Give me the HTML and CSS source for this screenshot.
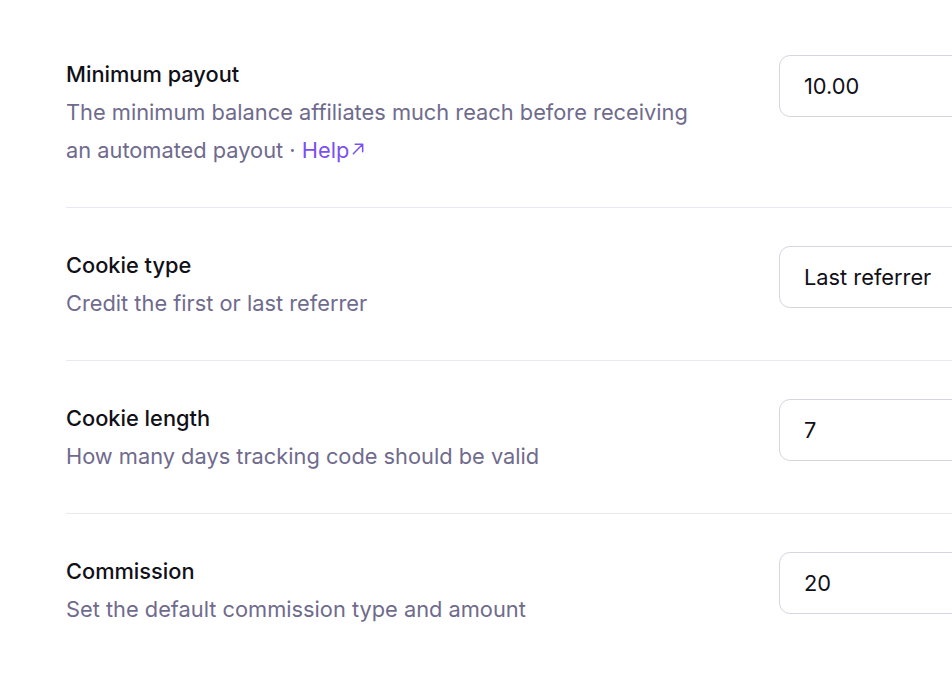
FILE: index.html
```html
<!DOCTYPE html>
<html lang="en">
<head>
  <meta charset="UTF-8">
  <title>Affiliate settings</title>
  <link rel="stylesheet" href="styles.css">
</head>
<body>
  <div class="settings">
    <div class="row">
      <div class="info">
        <div class="label">Minimum payout</div>
        <div class="desc">The minimum balance affiliates much reach before receiving an automated payout · <a class="help" href="#">Help<svg class="ext" viewBox="0 0 12 12" width="14" height="14"><path d="M2 10 10 2M3.6 2H10v6.4" fill="none" stroke="currentColor" stroke-width="1.3" stroke-linecap="round" stroke-linejoin="round"/></svg></a></div>
      </div>
      <div class="field"><input class="text-input" type="text" value="10.00"></div>
    </div>
    <div class="row">
      <div class="info">
        <div class="label">Cookie type</div>
        <div class="desc">Credit the first or last referrer</div>
      </div>
      <div class="field"><input class="text-input" type="text" value="Last referrer"></div>
    </div>
    <div class="row">
      <div class="info">
        <div class="label">Cookie length</div>
        <div class="desc">How many days tracking code should be valid</div>
      </div>
      <div class="field"><input class="text-input" type="text" value="7"></div>
    </div>
    <div class="row">
      <div class="info">
        <div class="label">Commission</div>
        <div class="desc">Set the default commission type and amount</div>
      </div>
      <div class="field"><input class="text-input" type="text" value="20"></div>
    </div>
  </div>
</body>
</html>
```
FILE: styles.css
```css
body {
  margin: 0;
  padding: 0;
  background: #fff;
  font-family: Inter, "Noto Sans", sans-serif;
  overflow: hidden;
}

.settings {
  width: 1100px;
  padding: 17px 0 0 66px;
}

.row {
  display: flex;
  align-items: flex-start;
  padding: 38px 0;
  border-bottom: 1px solid #e9e8f0;
}

.row:last-child {
  border-bottom: none;
}

.info {
  flex: 0 0 640px;
}

.label {
  font-size: 21.8px;
  line-height: 38px;
  font-weight: 450;
  color: #111018;
}

.desc {
  font-size: 21.8px;
  line-height: 38px;
  color: #6f6b8d;
}

.help {
  color: #7950f2;
  text-decoration: none;
}

.ext {
  margin-left: 2px;
  vertical-align: 2px;
}

.field {
  margin-left: 73px;
  flex: 0 0 320px;
}

.text-input {
  box-sizing: border-box;
  width: 100%;
  height: 62px;
  padding: 0 24px;
  border: 1.5px solid #d7d5e2;
  border-radius: 11px;
  font-family: inherit;
  font-size: 21.8px;
  color: #111018;
  background: #fff;
  outline: none;
}
```
